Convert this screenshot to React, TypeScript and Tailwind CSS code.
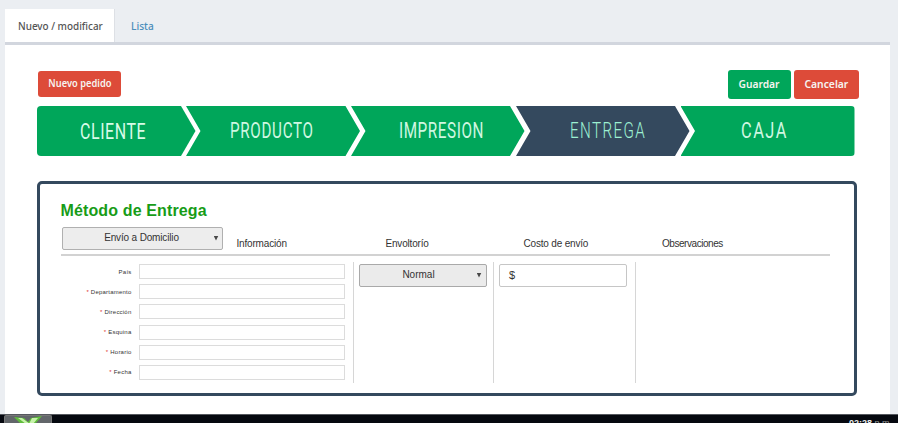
import React from "react";

const ARROW = "[clip-path:polygon(0_0,calc(100%-14.5px)_0,100%_50%,calc(100%-14.5px)_100%,0_100%,14.5px_50%)]";

const steps = [
  { label: "CLIENTE", box: "w-[159px] rounded-l bg-[#00a65a] [clip-path:polygon(0_0,calc(100%-14.5px)_0,100%_50%,calc(100%-14.5px)_100%,0_100%)]", text: "pl-[43px] pt-[2px]", type: "font-normal tracking-[0.8px] scale-x-[0.725] text-[#d8fbe8]" },
  { label: "PRODUCTO", box: "-ml-[9.5px] w-[174px] bg-[#00a65a] " + ARROW, text: "pl-[43.5px]", type: "font-normal tracking-[1px] scale-x-[0.69] text-[#cff7e1]" },
  { label: "IMPRESION", box: "-ml-[9px] w-[173.5px] bg-[#00a65a] " + ARROW, text: "pl-[47.5px]", type: "font-normal tracking-[0.8px] scale-x-[0.695] text-[#cff7e1]" },
  { label: "ENTREGA", box: "-ml-[8.5px] w-[173.5px] bg-[#34495e] " + ARROW, text: "pl-[53.5px]", type: "font-light tracking-[2px] scale-x-[0.69] text-[#9df0d2]" },
  { label: "CAJA", box: "-ml-[9px] w-[174px] rounded-r bg-[#00a65a] [clip-path:polygon(0_0,100%_0,100%_100%,0_100%,14.5px_50%)]", text: "pl-[60px]", type: "font-normal tracking-[2px] scale-x-[0.745] text-[#cff7e1]" },
];

const fields = [
  { label: "País", required: false },
  { label: "Departamento", required: true },
  { label: "Dirección", required: true },
  { label: "Esquina", required: true },
  { label: "Horario", required: true },
  { label: "Fecha", required: true },
];

function Caret() {
  return <span className="h-[5px] w-[5px] bg-[#484848] [clip-path:polygon(0_0,100%_0,50%_100%)]" />;
}

export default function App() {
  return (
    <div className="flex h-[423px] w-[898px] flex-col overflow-hidden bg-[#ebeef2] font-['Liberation_Sans',sans-serif] text-[#333]">
      <nav className="ml-[5px] mt-[9px] flex h-[33px] shrink-0 font-['Noto_Sans',sans-serif] text-[11px] leading-[33px]">
        <div className="w-[109.5px] border-r border-[#dde0e5] bg-white pl-[12.5px] font-medium whitespace-nowrap text-[#555]">
          <span className="inline-block origin-left scale-x-[0.9]">Nuevo / modificar</span>
        </div>
        <a className="pl-[16px] font-medium text-[#4a8dbb]">
          <span className="inline-block origin-left scale-x-[0.92]">Lista</span>
        </a>
      </nav>
      <main className="ml-[5px] flex h-[372px] w-[884.5px] shrink-0 flex-col border-t-[3px] border-[#d2d6de] bg-white pl-[31.5px]">
        <div className="mt-[25px] flex h-[29px] w-[822.5px] shrink-0 items-start pl-[1.5px] font-['Noto_Sans',sans-serif] text-[11px] font-semibold text-[#f6f4f1]">
          <button className="mt-[0.5px] flex h-[26.5px] w-[83px] items-center justify-center rounded-[3px] bg-[#dd4b39] text-[10px]">
            <span className="scale-x-[0.93] whitespace-nowrap">Nuevo pedido</span>
          </button>
          <button className="ml-auto flex h-[29px] w-[63px] items-center justify-center rounded-[3px] bg-[#00a65a]">
            <span className="scale-x-[0.93]">Guardar</span>
          </button>
          <button className="ml-[3px] flex h-[29px] w-[65px] items-center justify-center rounded-[3px] bg-[#dd4b39]">
            <span className="scale-x-[0.94]">Cancelar</span>
          </button>
        </div>
        <div className="mt-[7px] flex h-[50px] shrink-0">
          {steps.map((s) => (
            <div key={s.label} className={`flex shrink-0 items-center ${s.box} ${s.text}`}>
              <span className={`origin-left font-['Roboto',sans-serif] text-[22px] leading-none ${s.type}`}>{s.label}</span>
            </div>
          ))}
        </div>
        <section className="mt-[25px] flex h-[215px] w-[820px] shrink-0 flex-col rounded-[5px] border-[3.5px] border-[#34495e] pl-[21px]">
          <h1 className="mt-[18px] h-[18px] text-[16px] leading-[18px] font-bold tracking-[0.13px] text-[#179c17]">Método de Entrega</h1>
          <div className="mt-[6.5px] flex h-[23px] pl-px">
            <div className="flex w-[161px] items-center rounded-[2px] border border-[#b0b0b0] bg-[#ededed] pr-[3px] text-[10px] tracking-[-0.15px]">
              <span className="flex-1 pb-px pl-[7px] text-center">Envío a Domicilio</span>
              <Caret />
            </div>
            <div className="flex pt-[10.5px] text-[10px] leading-[14px] tracking-[-0.18px] whitespace-nowrap">
              <span className="w-[149px] pl-[14px]">Información</span>
              <span className="w-[138px] pl-[14px]">Envoltorío</span>
              <span className="w-[139px] pl-[14px]">Costo de envío</span>
              <span className="pl-[13.5px] tracking-[-0.45px]">Observaciones</span>
            </div>
          </div>
          <div className="mt-[4.5px] h-[2px] w-[769px] shrink-0 bg-[#d2d2d2]" />
          <div className="mt-[5.5px] flex h-[121px] shrink-0">
            <div className="flex w-[293px] flex-col gap-[5.2px] border-r border-[#d6d6d6] pt-[2.5px]">
              {fields.map((f) => (
                <label key={f.label} className="flex h-[15px] shrink-0 items-center">
                  <span className="w-[71px] text-right text-[6px] leading-[8px] tracking-[0.22px] whitespace-nowrap">
                    {f.required && <span className="text-[#d33]">* </span>}
                    {f.label}
                  </span>
                  <span className="ml-[7px] h-[15px] w-[206px] border border-[#dcdcdc] bg-white" />
                </label>
              ))}
            </div>
            <div className="w-[140.5px] border-r border-[#d6d6d6] pt-[2px] pl-[5px]">
              <div className="flex h-[23px] w-[128px] items-center rounded-[2px] border border-[#a9a9a9] bg-[#ebebeb] pr-[4px] text-[10px]">
                <span className="flex-1 pb-px pl-px text-center">Normal</span>
                <Caret />
              </div>
            </div>
            <div className="w-[142px] border-r border-[#d6d6d6] pt-[2px] pl-[5px]">
              <div className="flex h-[23.5px] w-[128px] items-center rounded-[2px] border border-[#c6c6c6] bg-white pb-px pl-[9px] text-[11px]">$</div>
            </div>
          </div>
        </section>
      </main>
      <footer className="flex h-[9px] shrink-0 justify-between overflow-hidden border-t border-[#55585e] bg-[#05080f] pl-[4px]">
        <div className="h-[9px] w-[48px] rounded-t-[2px] border border-b-0 border-[#777] bg-[#62666a]">
          <svg className="ml-[9px]" width="29" height="8" viewBox="0 0 29 8">
            <path d="M0 1 10 2 14 6 17 2 28 0 21 8H7Z" fill="#60bd3c" />
            <path d="m4 2 8 6h4L8 2Zm14 0-3 6h4l5-6Z" fill="#c7f3aa" />
          </svg>
        </div>
        <span className="mt-[3px] w-[49px] text-[9px] leading-[11px] font-bold whitespace-nowrap text-[#eee]">02:28 <span className="font-normal text-[#999]">p.m.</span></span>
      </footer>
    </div>
  );
}
